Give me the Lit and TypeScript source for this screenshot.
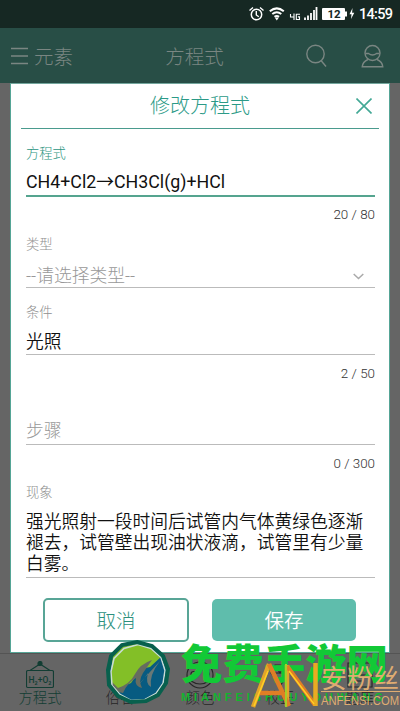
import { LitElement, html, css, svg } from "lit";
import { customElement } from "lit/decorators.js";

@customElement("status-bar")
class StatusBar extends LitElement {
  static styles = css`
    :host { display: block; height: 28px; background: #162823; }
    svg { display: block; }
    text { font-family: Roboto, sans-serif; }
  `;
  render() {
    return html`<svg width="400" height="28" viewBox="0 0 400 28" fill="none" stroke="#fff">
      <circle cx="256.5" cy="14.5" r="5.2" stroke-width="1.5" />
      <path d="M256.3 11v4l2.5 1.8M249.5 10.5l3.5-3M263.5 10.5l-3.5-3" stroke-width="1.4" />
      <g stroke-width="2">
        <path d="M269.8 11.2q7-5.7 14 0M272.3 14q4.5-3.5 9 0M274.5 16.7q2.3-1.6 4.6 0" />
        <path d="M274.7 17.6h4.2L276.8 20.6z" fill="#fff" stroke="none" />
      </g>
      <path d="M290.5 14v3h4M294 13.5v6.5M300 14.3h-3.7v5.2h3.2v-2.6h-1.6" stroke-width="1.1" />
      <path d="M305 17.500v2.500M308 15.500V20M311 13v7M314 10v10M316.500 7v13" stroke-width="1.800" />
      <rect x="322" y="8" width="23" height="12" rx="1" fill="#fff" stroke="none" />
      <rect x="345" y="11.5" width="2" height="5" fill="#fff" stroke="none" />
      <text x="334" y="18" font-size="11.5" font-weight="700" text-anchor="middle" fill="#162823" stroke="none">12</text>
      <path d="M352.5 8l-3 6.2h2L351 19l3.3-6.2h-2.2z" fill="#fff" stroke="none" />
      <text x="359" y="19.2" font-size="14.5" font-weight="500" textLength="34" fill="#fff" stroke="none">14:59</text>
    </svg>`;
  }
}

@customElement("nav-header")
class NavHeader extends LitElement {
  static styles = css`
    :host {
      display: grid; grid-template-columns: 1fr auto 1fr; align-items: center;
      height: 55px; box-sizing: border-box; padding: 0 16px 0 11px;
      background: #284e46; color: #7a8682; font-size: 19.5px; font-weight: 300;
    }
    .left { display: flex; align-items: center; gap: 6px; }
    .title { margin: 0 6px 0 0; }
    .right { display: flex; justify-content: flex-end; gap: 34px; }
    svg { fill: none; stroke: currentColor; stroke-width: 1.4; display: block; }
  `;
  render() {
    return html`
      <div class="left">
        <svg width="17" height="18"><path d="M0 1.5h17M0 9h17M0 16.5h17" /></svg>
        <span>元素</span>
      </div>
      <div class="title">方程式</div>
      <div class="right">
        <svg width="21" height="24" viewBox="0 0 21 24"><circle cx="9.5" cy="10" r="8.7" /><path d="M15 16.5l5 6" /></svg>
        <svg width="23" height="24" viewBox="0 0 23 24"><circle cx="11.5" cy="9" r="7.5" /><path d="M4.5 9.5h3q4 3 8 0h3M7 15.5Q1.5 18 1.2 22.8h20.6Q21.5 18 16 15.5" /></svg>
      </div>`;
  }
}

@customElement("edit-dialog")
class EditDialog extends LitElement {
  static styles = css`
    :host {
      display: flex; flex-direction: column; box-sizing: border-box;
      margin: 0 10px; height: 570px; padding: 0 10px;
      background: #fff; border: 1.4px solid #55a596; border-top-color: #73a69d;
    }
    .head {
      display: grid; grid-template-columns: 1fr auto 1fr; align-items: center;
      height: 44px; border-bottom: 1px solid #4a9b8e; color: #2b9a87; font-size: 20px; font-weight: 300;
    }
    .head span { grid-column: 2; margin-top: -3px; }
    .close { justify-self: end; margin-right: 7px; }
    .form { padding: 0 4px 0 5px; color: #111; font-size: 17.75px; font-weight: 350; }
    .label { height: 20px; line-height: 20px; font-size: 13.3px; font-weight: 300; color: #8f8f8f; }
    .label.active { color: #2b957f; }
    .value {
      box-sizing: border-box; display: flex; align-items: center; justify-content: space-between;
      line-height: 21px; border-bottom: 1px solid #bbb;
    }
    .value.active { border-bottom: 2px solid #55a48f; }
    .hint { color: #989898; font-weight: 300; }
    .count { font-size: 13.4px; font-weight: 300; line-height: 16px; height: 16px; color: #333; text-align: right; }
    .equation { margin-top: 15px; }
    .equation .value { height: 33px; padding-top: 4px; font-size: 17.8px; font-weight: 400; }
    .equation .count { margin-top: 10px; }
    .kind { margin-top: 12px; }
    .kind .value { height: 33px; padding-top: 11px; }
    .kind svg { margin-right: 11px; }
    .condition { margin-top: 15px; }
    .condition .value { height: 32px; padding-top: 7px; }
    .condition .count { margin-top: 11px; }
    .steps { margin-top: 38px; }
    .steps .value { height: 25px; padding-bottom: 2px; }
    .steps .count { margin-top: 11px; }
    .result { margin-top: 11px; }
    .result .value { height: 75px; padding-top: 6px; }
    .buttons { display: flex; gap: 23px; margin: 20px 0 0 17px; font-size: 19.5px; font-weight: 300; }
    .btn { box-sizing: border-box; height: 44px; width: 144px; border-radius: 5px; display: grid; place-items: center; padding-bottom: 2px; }
    .cancel { width: 146px; border: 2px solid #58a596; color: #2b907d; }
    .save { background: #5fbdac; color: #fff; height: 42px; margin-top: 1px; font-weight: 350; }
  `;
  render() {
    return html`
      <div class="head">
        <span>修改方程式</span>
        <svg class="close" width="16" height="16" viewBox="0 0 16 16" fill="none" stroke="#42a895" stroke-width="1.6"><path d="M.5.5l15 15M15.5.5l-15 15" /></svg>
      </div>
      <div class="form">
        <div class="equation">
          <div class="label active">方程式</div>
          <div class="value active">CH4+Cl2→CH3Cl(g)+HCl</div>
          <div class="count">20 / 80</div>
        </div>
        <div class="kind">
          <div class="label">类型</div>
          <div class="value"><span class="hint">--请选择类型--</span>
            <svg width="11" height="7" viewBox="0 0 11 7" fill="none" stroke="#aaa" stroke-width="1.5"><path d="M.7 1l4.8 4.5L10.3 1" /></svg>
          </div>
        </div>
        <div class="condition">
          <div class="label">条件</div>
          <div class="value">光照</div>
          <div class="count">2 / 50</div>
        </div>
        <div class="steps">
          <div class="value"><span class="hint">步骤</span></div>
          <div class="count">0 / 300</div>
        </div>
        <div class="result">
          <div class="label">现象</div>
          <div class="value">强光照射一段时间后试管内气体黄绿色逐渐褪去，试管壁出现油状液滴，试管里有少量白雾。</div>
        </div>
        <div class="buttons"><div class="btn cancel">取消</div><div class="btn save">保存</div></div>
      </div>`;
  }
}

const tabs = [
  { name: "方程式", icon: svg`<path d="M4 9.500h22q1.500 0 1.500 1.500v14q0 1.500-1.500 1.500H2q-1.500 0-1.500-1.500V11q0-1.500 1.500-1.500h2L14 3l10 6.500"/><circle cx="14" cy="2.500" r="2" fill="currentColor"/><text x="14" y="21.500" text-anchor="middle">H₂+O₂</text>` },
  { name: "俗名", icon: svg`<path d="M4 24V13l4 4 5-10 5 10 5-4v11z"/>` },
  { name: "颜色", icon: svg`<circle cx="14" cy="14" r="13"/><circle cx="7.500" cy="13" r="2.500"/><circle cx="14" cy="7" r="2.500"/><circle cx="20.500" cy="13" r="2.500"/><path d="M5 20q9 6 18 0"/>` },
  { name: "校正", icon: svg`<path d="M9 4h10l4 8-9 13-9-13zM9 4l5 8 5-8M5 12h18"/>` },
  { name: "题库", icon: svg`<path d="M2 2h24v24H2zM8 8h12M8 14h12M8 20h8"/>` },
];

@customElement("tab-bar")
class TabBar extends LitElement {
  static styles = css`
    :host {
      display: grid; grid-template-columns: repeat(5, 1fr); box-sizing: border-box; height: 58px;
      border-top: 1px solid #545454; background: #656565; color: #262626; font-size: 14.3px; font-weight: 300;
    }
    .tab { display: flex; flex-direction: column; align-items: center; padding-top: 7px; }
    .current { color: #123d33; }
    svg { fill: none; stroke: currentColor; stroke-width: 1.2; }
    svg text { font: 500 8.5px Roboto, sans-serif; fill: currentColor; stroke: none; }
    .name { line-height: 18px; }
  `;
  render() {
    return html`${tabs.map((t, i) => html`<div class="tab ${i === 0 ? "current" : ""}">
      <svg width="28" height="28" viewBox="0 0 28 28">${t.icon}</svg><span class="name">${t.name}</span>
    </div>`)}`;
  }
}

@customElement("site-marks")
class SiteMarks extends LitElement {
  static styles = css`
    :host { display: block; position: absolute; left: 0; bottom: 0; pointer-events: none; }
    svg { display: block; }
    .cn { font: 900 41px "Noto Sans CJK SC", sans-serif; fill: #12c936; }
    .latin { font: 700 11px "Liberation Sans", sans-serif; fill: #12b52f; }
    .gold { fill: #dfac72; font-family: "Liberation Sans", "Noto Sans CJK SC", sans-serif; }
  `;
  render() {
    return html`<svg width="400" height="96" viewBox="0 615 400 96">
      <path d="M137 642l15 4 11 10 4 13-2 15-8 11-11 6-16 1-12-6-8-10-2-15 3-14 11-11z" fill="#075b81" />
      <path d="M110 678l3-23 10-9 14-4 15 4 10 10-12 11-9 2-10 14-13 6-7-2z" fill="#83bf27" />
      <path d="M110 680l8 8q12-4 17-14t17-14l-9 13q-5 8-1 15-8-2-6-10-9 5-13 15l-13-3z" fill="#666c61" />
      <path d="M139 684q10-11 21-23-11 14-9 26-6-3-3-14-6 9-9 11z" fill="#697876" />
      <path d="M138 644.500l13 4 10 9 4 13-2 13-7 10-11 6-14 1-11-6-8-9-1-14 3-13 10-10z" fill="none" stroke="#c9dcd6" stroke-width="1.500" />
      <path d="M137 642l15 4 11 10 5 13-2 14-8 12-12 6-15 1-13-6-9-11-1-15 3-14 11-11z" fill="none" stroke="#08604d" stroke-width="4" />
      <text class="cn" x="181" y="679" textLength="207" lengthAdjust="spacingAndGlyphs">免费手游网</text>
      <text class="latin" x="181" y="701" textLength="202">MIANFEISHOUYOUWANG</text>
      <g fill="none" stroke-width="4.500">
        <path d="M253 707l16-43M287 706v-41" stroke="#e2a529" />
        <path d="M269 664l20 42M259 693h23M287 666l28 39" stroke="#df7e25" />
        <path d="M315.500 706v-43" stroke="#e9ab22" />
        <path d="M286 707v-43" stroke="#a3ce2b" stroke-width="2" />
        <path d="M254 706l14-35M289 671l25 33" stroke="#ffcf25" stroke-width="1.500" />
      </g>
      <text class="gold" x="321" y="688" font-size="26" font-weight="400" textLength="78">安粉丝</text>
      <path d="M321 691.500h79" stroke="#dfac72" />
      <text class="gold" x="321" y="704.500" font-size="12.500" textLength="78" lengthAdjust="spacingAndGlyphs">ANFENSI.COM</text>
    </svg>`;
  }
}

@customElement("app-root")
class AppRoot extends LitElement {
  static styles = css`
    :host {
      display: block; position: relative; width: 400px; height: 711px; overflow: hidden;
      background: #656565; font-family: Roboto, "Noto Sans CJK SC", sans-serif;
    }
  `;
  render() {
    return html`<status-bar></status-bar><nav-header></nav-header><edit-dialog></edit-dialog><tab-bar></tab-bar><site-marks></site-marks>`;
  }
}
